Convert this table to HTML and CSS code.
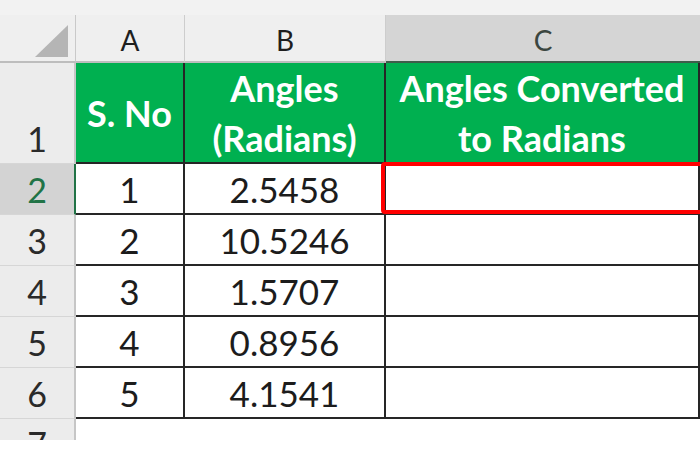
FILE: index.html
```html
<!DOCTYPE html>
<html>
<head>
<meta charset="utf-8">
<link rel="stylesheet" href="styles.css">
</head>
<body>
<div class="sheet">
  <div class="strip"></div>

  <div class="corner">
    <svg class="tri" width="76" height="48" viewBox="0 0 76 48"><polygon points="35,42 68,42 68,10" fill="#b5b5b5"/></svg>
  </div>
  <div class="colhead">A</div>
  <div class="colhead">B</div>
  <div class="colhead sel">C</div>

  <div class="rowhead first">1</div>
  <div class="cell hdr">S. No</div>
  <div class="cell hdr">Angles<br>(Radians)</div>
  <div class="cell hdr">Angles Converted<br>to Radians</div>

  <div class="rowhead selrow">2</div>
  <div class="cell">1</div>
  <div class="cell">2.5458</div>
  <div class="cell active"><div class="selbox"></div></div>

  <div class="rowhead">3</div>
  <div class="cell">2</div>
  <div class="cell">10.5246</div>
  <div class="cell"></div>

  <div class="rowhead">4</div>
  <div class="cell">3</div>
  <div class="cell">1.5707</div>
  <div class="cell"></div>

  <div class="rowhead">5</div>
  <div class="cell">4</div>
  <div class="cell">0.8956</div>
  <div class="cell"></div>

  <div class="rowhead">6</div>
  <div class="cell">5</div>
  <div class="cell">4.1541</div>
  <div class="cell"></div>

  <div class="rowhead last">7</div>
  <div class="blank"></div>
  <div class="blank"></div>
  <div class="blank"></div>
</div>
</body>
</html>
```

FILE: styles.css
```css
* { box-sizing: border-box; }
html, body { margin: 0; padding: 0; background: #ffffff; }
body { font-family: "Lato", "Open Sans", sans-serif; }

.sheet {
  width: 700px;
  height: 440px;
  overflow: hidden;
  display: grid;
  grid-template-columns: 76px 109px 201px 1fr;
  grid-template-rows: 15px 48px 101px repeat(6, 51px);
}

.strip {
  grid-column: 1 / -1;
  background: #f2f2f2;
}

.corner {
  background: #efefef;
  border-right: 1px solid #c9c9c9;
  border-bottom: 2px solid #bdbdbd;
}
.tri { display: block; }

.colhead {
  background: #efefef;
  border-right: 1px solid #cdcdcd;
  border-bottom: 2px solid #bdbdbd;
  display: flex;
  align-items: center;
  justify-content: center;
  padding-top: 3px;
  font-size: 28px;
  color: #1e1e1e;
}
.colhead.sel {
  background: #d5d5d5;
  border-bottom: 2px solid #3e5d4a;
  color: #3b4640;
  border-right: none;
}

.rowhead {
  background: #ececec;
  border-right: 2px solid #c6c6c6;
  border-bottom: 1px solid #d6d6d6;
  display: flex;
  align-items: center;
  justify-content: center;
  font-size: 34px;
  color: #2a2a2a;
}
.rowhead.first {
  align-items: flex-end;
  padding-bottom: 4px;
}
.rowhead.selrow {
  background: #d3d3d3;
  color: #217346;
  border-right: 2px solid #217346;
}
.rowhead.last {
  align-items: flex-start;
  padding-top: 4px;
}

.cell {
  border-right: 2px solid #262626;
  border-bottom: 2px solid #262626;
  display: flex;
  align-items: center;
  justify-content: center;
  font-size: 35px;
  color: #1c1c1c;
  background: #ffffff;
}
.cell.hdr {
  background: #00b050;
  color: #ffffff;
  font-weight: 700;
  font-size: 36px;
  text-align: center;
  line-height: 50px;
}

.active { position: relative; }
.selbox {
  position: absolute;
  left: -5px;
  top: -2px;
  bottom: -1px;
  right: -10px;
  border: 4px solid #ff0000;
  border-radius: 4px;
}

.blank { background: #ffffff; }
```
